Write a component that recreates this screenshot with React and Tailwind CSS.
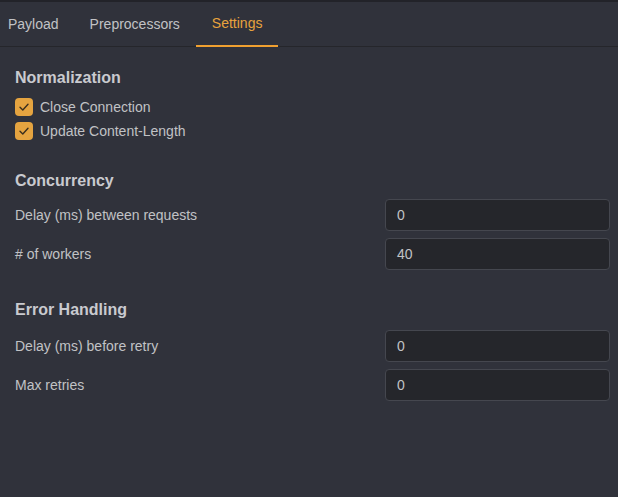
export default function App() {
  const font = { fontFamily: '"Liberation Sans", Arial, sans-serif' };
  const Check = ({ label }) => (
    <label className="flex items-center h-6 gap-[7px]">
      <span className="w-[18px] h-[18px] rounded-[4px] bg-[#e5a440] flex items-center justify-center">
        <svg width="12" height="12" viewBox="0 0 12 12" fill="none">
          <path d="M2 6.2 L4.8 9 L10 3.2" stroke="#3a2f1e" strokeWidth="1.4" strokeLinecap="round" strokeLinejoin="round" />
        </svg>
      </span>
      <span className="text-[14px] text-[#c1c2c5]">{label}</span>
    </label>
  );
  const Row = ({ label, value }) => (
    <div className="flex items-center justify-between h-8">
      <span className="text-[14px] text-[#c1c2c5]">{label}</span>
      <div className="w-[225px] h-8 rounded-[4px] border border-[#45474f] bg-[#25262b] flex items-center px-[11px] text-[14px] text-[#c1c2c5]">
        {value}
      </div>
    </div>
  );
  return (
    <div style={font} className="w-[618px] h-[497px] bg-[#30323b] overflow-hidden flex flex-col">
      <div className="h-[2px] bg-[#222329]" />
      <div className="flex h-[45px] border-b border-[#25262b] text-[14px]">
        <div className="pl-2 pr-[15px] flex items-center text-[#c1c2c5]">Payload</div>
        <div className="px-4 flex items-center text-[#c1c2c5]">Preprocessors</div>
        <div className="px-4 flex items-center text-[#e8a33d] border-b-2 border-[#f0a030] mb-[-1px]">Settings</div>
      </div>
      <div className="pl-[15px] pr-[8px] pt-[19px] flex flex-col">
        <div className="h-6 flex items-center text-[16px] font-bold text-[#c9cacf]">Normalization</div>
        <div className="mt-[5px] flex flex-col">
          <Check label="Close Connection" />
          <Check label="Update Content-Length" />
        </div>
        <div className="mt-[26px] h-6 flex items-center text-[16px] font-bold text-[#c9cacf]">Concurrency</div>
        <div className="mt-[6px] flex flex-col gap-[7px]">
          <Row label="Delay (ms) between requests" value="0" />
          <Row label="# of workers" value="40" />
        </div>
        <div className="mt-[28px] h-6 flex items-center text-[16px] font-bold text-[#c9cacf]">Error Handling</div>
        <div className="mt-[8px] flex flex-col gap-[7px]">
          <Row label="Delay (ms) before retry" value="0" />
          <Row label="Max retries" value="0" />
        </div>
      </div>
    </div>
  );
}
